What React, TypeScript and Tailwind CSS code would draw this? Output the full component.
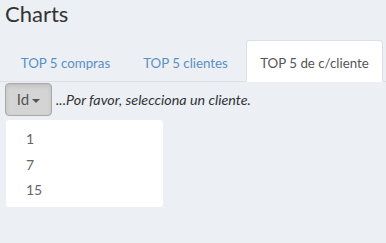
const tabs = [
  { label: 'TOP 5 compras', w: 'w-[119px]' },
  { label: 'TOP 5 clientes', w: 'w-[113px]' },
  { label: 'TOP 5 de c/cliente', w: 'w-[137px]' },
]
const ids = ['1', '7', '15']

export default function App() {
  const active = 2

  return (
    <div className="w-[386px] h-[243px] bg-[#ecf0f5] overflow-hidden font-['Lato',sans-serif] text-[#333]">
      <h1 className="px-[5px] pt-[1px] text-[22px] leading-[26px] text-[#333]">Charts</h1>

      <ul className="mt-[13px] flex gap-[4px] border-b border-[#dcdfe3] pl-[6px]">
        {tabs.map((t, i) => (
          <li key={t.label} className={`${t.w} -mb-px`}>
            <a
              className={
                i === active
                  ? 'block h-[42px] pt-[12px] text-center whitespace-nowrap text-[13.3px] leading-[20px] bg-white border border-[#dcdfe3] border-b-white rounded-t-[4px] text-[#555]'
                  : 'block h-[42px] pt-[12px] text-center whitespace-nowrap text-[13.3px] leading-[20px] border border-transparent text-[#5a8fc3]'
              }
            >
              {t.label}
            </a>
          </li>
        ))}
      </ul>

      <div className="px-[5px] pt-[1px] flex items-center gap-[4px]">
        <button className="w-[47px] h-[33px] flex items-center justify-center gap-[3px] rounded-[4px] border border-[#a8a8a8] bg-[#d4d4d4] shadow-[inset_0_2px_4px_rgba(0,0,0,0.1)] text-[15px] text-[#555]">
          Id
          <span className="inline-block w-0 h-0 border-l-[4px] border-r-[4px] border-t-[4px] border-l-transparent border-r-transparent border-t-[#555] mt-[2px]" />
        </button>
        <span className="italic text-[14.3px] text-[#333] whitespace-nowrap">...Por favor, selecciona un cliente.</span>
      </div>

      <div className="ml-[6px] mt-[4px] w-[157px] h-[87px] bg-white rounded-[3px] pt-[9px] pl-[20px] text-[14px] text-[#666]">
        {ids.map(n => (
          <div key={n} className="h-[25.5px] leading-[20px]">{n}</div>
        ))}
      </div>
    </div>
  )
}
